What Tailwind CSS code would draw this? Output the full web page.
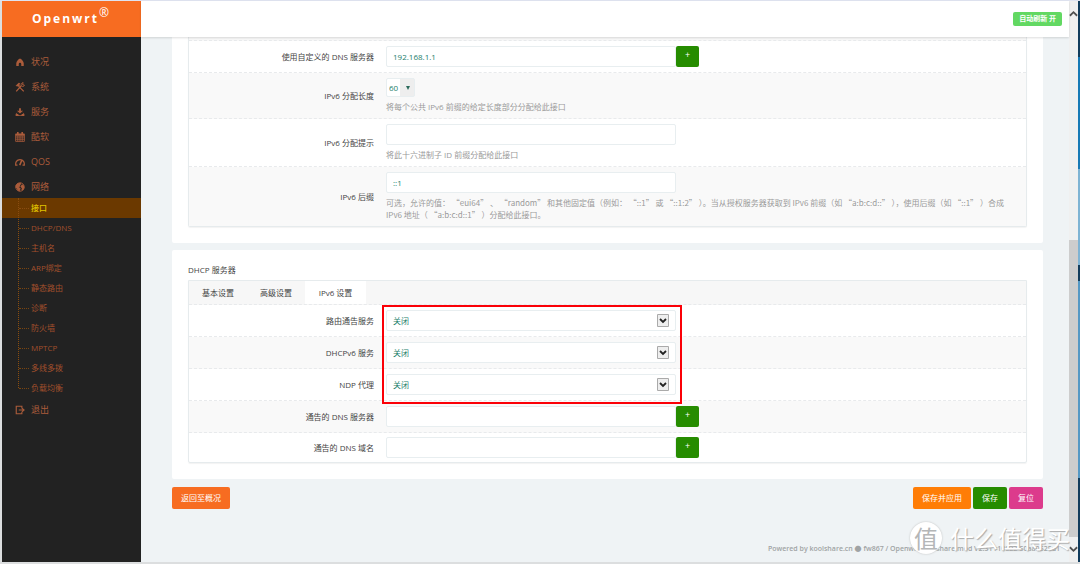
<!DOCTYPE html>
<html lang="zh-CN">
<head>
<meta charset="utf-8">
<meta name="viewport" content="width=device-width, initial-scale=1">
<title>Openwrt - 接口</title>
<script src="https://cdn.jsdelivr.net/npm/@tailwindcss/browser@4"></script>
</head>
<body class="flex h-screen flex-col overflow-hidden bg-[#dfe3f0] pt-px font-['Open_Sans','Noto_Sans_CJK_SC',sans-serif] text-[8px] leading-3 text-[#444]">
<div class="flex min-h-0 flex-1 border-b-2 border-l-2 border-[#dcdedf]">

  <!-- Sidebar -->
  <aside class="flex w-[139px] shrink-0 flex-col bg-[#222] text-[#ab5c3b]">
    <a href="#" class="flex h-9 items-center justify-center bg-[#f76c21] text-[12px] font-bold tracking-[2px] text-white"><span>Openwrt<sup class="text-[12px] font-normal">®</sup></span></a>
    <nav class="pt-3 text-[9px]">
      <ul>
        <li><a href="#" class="flex h-[25px] items-center gap-1.5 pl-[13px]"><svg class="size-2.5" viewBox="0 0 16 16" fill="currentColor"><path d="M8 2.500C5 4 2.500 7 2 10v4.500h4V11a2 2 0 0 1 4 0v3.500h4V10C13.500 7 11 4 8 2.500Z"/></svg>状况</a></li>
        <li><a href="#" class="flex h-[25px] items-center gap-1.5 pl-[13px]"><svg class="size-2.5" viewBox="0 0 16 16" fill="none" stroke="currentColor" stroke-width="2"><path d="m2 15 8-9M6 7l8 8"/><path d="M10 6c-1-3 1-5 3-5l-1 3 3 1c0 2-3 3-5 1" stroke-width="1.500"/><path d="M1 6 6 1l3 1-2 1 1 2-3 3-2-2-1 1Z" fill="currentColor" stroke="none"/></svg>系统</a></li>
        <li><a href="#" class="flex h-[25px] items-center gap-1.5 pl-[13px]"><svg class="size-2.5" viewBox="0 0 16 16" fill="currentColor"><path d="M6.500 2h3v4H13L8 10.500 3 6h3.500ZM3 9l-2 2v3.500h14V11l-2-2h-1l1.500 2H11l-1 2H6l-1-2H2.500L4 9Z"/></svg>服务</a></li>
        <li><a href="#" class="flex h-[25px] items-center gap-1.5 pl-[13px]"><svg class="size-2.5" viewBox="0 0 16 16" fill="none" stroke="currentColor"><path d="M1 3h14v12H1ZM1 8h14M1 11.500h14M4.500 6v9M8 6v9M11.500 6v9" stroke-width="1.300"/><path d="M1 4.500h14M4.500 0v4M11.500 0v4" stroke-width="2.600"/></svg>酷软</a></li>
        <li><a href="#" class="flex h-[25px] items-center gap-1.5 pl-[13px]"><svg class="size-2.5" viewBox="0 0 16 16" fill="none" stroke="currentColor" stroke-width="2"><path d="M1.500 14C0 9 3 4 8 4s8 5 6.500 10M4 13H1M15 13h-3"/><path d="M11 5 7.500 13" stroke-width="2.500"/></svg>QOS</a></li>
        <li>
          <a href="#" class="flex h-[25px] items-center gap-1.5 pl-[13px]"><svg class="size-2.5" viewBox="0 0 16 16"><circle cx="8" cy="8" r="6.700" fill="none" stroke="currentColor" stroke-width="1.500"/><path fill="currentColor" d="M1 5 4 2l5-1 1 2-2 2 1 2-3 1 3 2-1 3-1 2-3-2-1-3-2-1ZM11 4l3 1 1 4-2 4-3 0 1-3-2-2 1-3Z"/></svg>网络</a>
          <ul class="relative -mt-px text-[8px] text-[#a14f2c]">
            <li class="bg-[#6b3900] font-medium text-[#e0c400]"><a href="#" class="flex h-5 items-center gap-0.5 pl-[17px]"><span class="w-2.5 border-t border-dotted border-[#8a4d10]"></span>接口</a></li>
            <li><a href="#" class="flex h-5 items-center gap-0.5 pl-[17px]"><span class="w-2.5 border-t border-dotted border-[#7a4510]"></span>DHCP/DNS</a></li>
            <li><a href="#" class="flex h-5 items-center gap-0.5 pl-[17px]"><span class="w-2.5 border-t border-dotted border-[#7a4510]"></span>主机名</a></li>
            <li><a href="#" class="flex h-5 items-center gap-0.5 pl-[17px]"><span class="w-2.5 border-t border-dotted border-[#7a4510]"></span>ARP绑定</a></li>
            <li><a href="#" class="flex h-5 items-center gap-0.5 pl-[17px]"><span class="w-2.5 border-t border-dotted border-[#7a4510]"></span>静态路由</a></li>
            <li><a href="#" class="flex h-5 items-center gap-0.5 pl-[17px]"><span class="w-2.5 border-t border-dotted border-[#7a4510]"></span>诊断</a></li>
            <li><a href="#" class="flex h-5 items-center gap-0.5 pl-[17px]"><span class="w-2.5 border-t border-dotted border-[#7a4510]"></span>防火墙</a></li>
            <li><a href="#" class="flex h-5 items-center gap-0.5 pl-[17px]"><span class="w-2.5 border-t border-dotted border-[#7a4510]"></span>MPTCP</a></li>
            <li><a href="#" class="flex h-5 items-center gap-0.5 pl-[17px]"><span class="w-2.5 border-t border-dotted border-[#7a4510]"></span>多线多拨</a></li>
            <li><a href="#" class="flex h-5 items-center gap-0.5 pl-[17px]"><span class="w-2.5 border-t border-dotted border-[#7a4510]"></span>负载均衡</a></li>
            <li aria-hidden="true" class="absolute top-0 bottom-2.5 left-4 border-l border-dotted border-[#8a4d10]"></li>
          </ul>
        </li>
        <li><a href="#" class="flex h-6 items-center gap-1.5 pl-[13px]"><svg class="size-2.5" viewBox="0 0 16 16" fill="none" stroke="currentColor" stroke-width="1.800"><path d="M11 5V2H2v12h9v-3M6 8h8M11 5l3.500 3L11 11"/></svg>退出</a></li>
      </ul>
    </nav>
  </aside>

  <!-- Page -->
  <div class="flex min-w-0 flex-1 flex-col bg-[#eff3f5]">
    <header class="z-10 flex h-9 shrink-0 items-center justify-end bg-white pr-[7px] shadow-[0_1px_2px_#0002]">
      <button type="button" class="h-3.5 rounded-xs bg-[#62d862] px-1.5 text-[7px] leading-3 font-bold whitespace-nowrap text-white">自动刷新 开</button>
    </header>

    <main class="min-h-0 flex-1 overflow-hidden pr-[26px] pl-[31px]">
      <form>
        <section class="rounded-b-xs bg-white px-4 pb-4">
          <div class="rounded-b-xs border border-t-0 border-[#e6ebed] shadow-[0_1px_1px_#0000000d]">
            <div class="h-1 border-b border-dashed border-[#e8eaec] bg-[#f8f8f8]"></div>
            <div class="flex items-center gap-3 border-b border-dashed border-[#e8eaec] py-[5px]">
              <label for="dns" class="w-[185px] shrink-0 text-right">使用自定义的 DNS 服务器</label>
              <div class="flex"><input id="dns" value="192.168.1.1" class="h-[21px] w-[290px] rounded-xs border border-[#e8eef0] bg-white px-1.5 text-[#1b806b]"><button type="button" aria-label="添加" class="h-[21px] w-[23px] rounded-xs bg-[#268c00] pb-1 text-[9px] text-white">+</button></div>
            </div>
            <div class="flex items-center gap-3 border-b border-dashed border-[#e8eaec] bg-[#f9f9f9] py-[5px]">
              <label for="len" class="w-[185px] shrink-0 text-right">IPv6 分配长度</label>
              <div class="text-[#999]">
                <div class="relative w-[29px]"><select id="len" class="block h-[19px] w-full appearance-none rounded-xs border border-[#e8eef0] bg-[linear-gradient(90deg,#fff_50%,#eee_50%)] pl-0.5 text-[#1b806b]"><option>60</option></select><svg class="pointer-events-none absolute top-2 right-[5px] size-1" viewBox="0 0 4 4" fill="#2a6a5b"><path d="M0 0h4L2 4Z"/></svg></div>
                <p class="mt-1">将每个公共 IPv6 前缀的给定长度部分分配给此接口</p>
              </div>
            </div>
            <div class="flex items-center gap-3 border-b border-dashed border-[#e8eaec] py-[5px]">
              <label for="hint" class="w-[185px] shrink-0 text-right">IPv6 分配提示</label>
              <div class="text-[#999]">
                <input id="hint" class="block h-[21px] w-[290px] rounded-xs border border-[#e8eef0] bg-white px-1.5 text-[#1b806b]">
                <p class="mt-1">将此十六进制子 ID 前缀分配给此接口</p>
              </div>
            </div>
            <div class="flex items-center gap-3 bg-[#f9f9f9] py-[5px]">
              <label for="suffix" class="w-[185px] shrink-0 text-right">IPv6 后缀</label>
              <div class="text-[#999]">
                <input id="suffix" value="::1" class="block h-[21px] w-[290px] rounded-xs border border-[#e8eef0] bg-white px-1.5 text-[#1b806b]">
                <p class="mt-1 font-['Noto_Sans_CJK_SC',sans-serif] whitespace-nowrap">可选，允许的值： “eui64” 、 “random” 和其他固定值（例如： “::1” 或 “::1:2” ）。当从授权服务器获取到 IPv6 前缀（如 “a:b:c:d::” ），使用后缀（如 “::1” ）合成<br>IPv6 地址（ “a:b:c:d::1” ）分配给此接口。</p>
              </div>
            </div>
          </div>
        </section>

        <section class="mt-[7px] rounded-xs bg-white px-4 pt-3.5 pb-4">
          <h2>DHCP 服务器</h2>
          <div class="mt-1 rounded-b-xs border border-[#e6ebed] shadow-[0_1px_1px_#0000000d]">
            <div class="flex h-6 border-b border-dashed border-[#e8eaec] bg-[#f7f7f7]">
              <button type="button" class="w-[58px]">基本设置</button>
              <button type="button" class="w-[58px]">高级设置</button>
              <button type="button" class="w-[61px] bg-white">IPv6 设置</button>
            </div>
            <div class="relative">
              <div class="flex items-center gap-3 border-b border-dashed border-[#e8eaec] py-[5px]">
                <label for="ra" class="w-[185px] shrink-0 text-right">路由通告服务</label>
                <div class="relative"><select id="ra" class="block h-[21px] w-[290px] appearance-none rounded-xs border border-[#e8eef0] bg-white px-1.5 text-[#1b806b]"><option>关闭</option></select><svg class="pointer-events-none absolute top-1 right-[7px] h-[13px] w-3" viewBox="0 0 12 13"><path d="M.5.5h11v12H.5Z" fill="#eee" stroke="#aaa"/><path d="m3 5 3 3 3-3" fill="none" stroke="#222" stroke-width="1.800"/></svg></div>
              </div>
              <div class="flex items-center gap-3 border-b border-dashed border-[#e8eaec] bg-[#f9f9f9] py-[5px]">
                <label for="dhcpv6" class="w-[185px] shrink-0 text-right">DHCPv6 服务</label>
                <div class="relative"><select id="dhcpv6" class="block h-[21px] w-[290px] appearance-none rounded-xs border border-[#e8eef0] bg-white px-1.5 text-[#1b806b]"><option>关闭</option></select><svg class="pointer-events-none absolute top-1 right-[7px] h-[13px] w-3" viewBox="0 0 12 13"><path d="M.5.5h11v12H.5Z" fill="#eee" stroke="#aaa"/><path d="m3 5 3 3 3-3" fill="none" stroke="#222" stroke-width="1.800"/></svg></div>
              </div>
              <div class="flex items-center gap-3 border-b border-dashed border-[#e8eaec] py-[5px]">
                <label for="ndp" class="w-[185px] shrink-0 text-right">NDP 代理</label>
                <div class="relative"><select id="ndp" class="block h-[21px] w-[290px] appearance-none rounded-xs border border-[#e8eef0] bg-white px-1.5 text-[#1b806b]"><option>关闭</option></select><svg class="pointer-events-none absolute top-1 right-[7px] h-[13px] w-3" viewBox="0 0 12 13"><path d="M.5.5h11v12H.5Z" fill="#eee" stroke="#aaa"/><path d="m3 5 3 3 3-3" fill="none" stroke="#222" stroke-width="1.800"/></svg></div>
              </div>
              <div class="pointer-events-none absolute top-0 -bottom-[3px] left-[193px] w-[300px] border-2 border-[#fb0007]"></div>
            </div>
            <div class="flex items-center gap-3 border-b border-dashed border-[#e8eaec] bg-[#f9f9f9] py-[5px]">
              <label for="adns" class="w-[185px] shrink-0 text-right">通告的 DNS 服务器</label>
              <div class="flex"><input id="adns" class="h-[21px] w-[290px] rounded-xs border border-[#e8eef0] bg-white px-1.5"><button type="button" aria-label="添加" class="h-[21px] w-[23px] rounded-xs bg-[#268c00] pb-1 text-[9px] text-white">+</button></div>
            </div>
            <div class="flex items-center gap-3 py-1">
              <label for="adom" class="w-[185px] shrink-0 text-right">通告的 DNS 域名</label>
              <div class="flex"><input id="adom" class="h-[21px] w-[290px] rounded-xs border border-[#e8eef0] bg-white px-1.5"><button type="button" aria-label="添加" class="h-[21px] w-[23px] rounded-xs bg-[#268c00] pb-1 text-[9px] text-white">+</button></div>
            </div>
          </div>
        </section>

        <div class="mt-2 flex gap-0.5 text-white">
          <button type="button" class="mr-auto h-[22px] w-[58px] rounded-xs bg-[#f76c21]">返回至概况</button>
          <button type="submit" class="h-[22px] w-[58px] rounded-xs bg-[#ff7d06]">保存并应用</button>
          <button type="button" class="h-[22px] w-[34px] rounded-xs bg-[#268c00]">保存</button>
          <button type="reset" class="h-[22px] w-[34px] rounded-xs bg-[#dc3b8c]">复位</button>
        </div>
      </form>
    </main>
    <footer class="pr-[9px] pb-2 text-right text-[7px] leading-[10px] font-semibold text-[#a0a3a4]">Powered by koolshare.cn ● fw867 / Openwrt koolshare mod V2.31 r10822-50aa0525d1</footer>
  </div>

  <!-- Window scrollbar -->
  <div aria-hidden="true" class="flex w-[9px] shrink-0 flex-col items-center justify-between bg-[#f0f0f0]">
    <svg class="mt-2 h-[9px] w-full" viewBox="0 0 10 9" fill="none" stroke="#505050" stroke-width="2"><path d="m1 7 4-4 4 4"/></svg>
    <div class="mt-auto h-[53%] w-full bg-[#cdcdcd]"></div>
    <svg class="my-2 h-[9px] w-full" viewBox="0 0 10 9" fill="none" stroke="#505050" stroke-width="2"><path d="m1 2 4 4 4-4"/></svg>
  </div>
  <div aria-hidden="true" class="w-0.5 shrink-0 bg-[linear-gradient(#123c5c_0_10%,#1879b5_10%_30%,#7fb3d3_30%_47%,#123c5c_47%_50%,#5598c4_50%_85%,#123c5c_85%)]"></div>
</div>

<!-- Watermark over the page corner -->
<div class="pointer-events-none absolute right-2.5 bottom-2.5 flex items-center gap-2 font-['Noto_Sans_CJK_SC',sans-serif] text-[24px] leading-8 whitespace-nowrap text-white [text-shadow:1px_1px_1px_#aaa]">
  <span class="flex size-8 items-center justify-center rounded-full bg-white text-[#b4b6b7] shadow-[0_0_2px_#bbb] [text-shadow:none]">值</span>
  <span>什么值得买</span>
</div>
</body>
</html>
